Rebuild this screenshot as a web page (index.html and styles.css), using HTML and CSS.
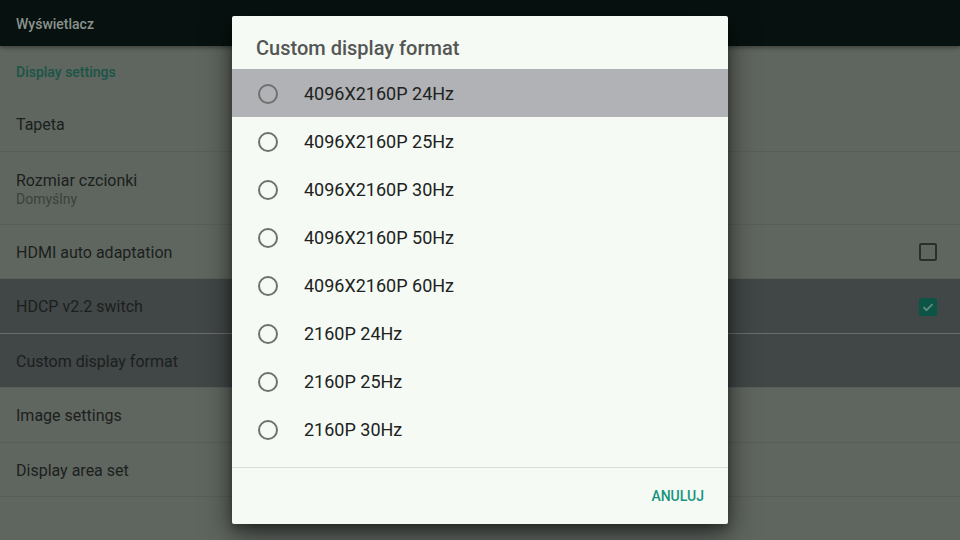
FILE: index.html
```html
<!DOCTYPE html>
<html lang="pl">
<head>
    <meta charset="UTF-8">
    <meta name="viewport" content="width=device-width, initial-scale=1.0">
    <title>Wyświetlacz</title>
    <link rel="stylesheet" href="styles.css">
</head>
<body>
    <div class="screen">
        <div class="top-bar">Wyświetlacz</div>
        <div class="settings">
            <div class="section-title">Display settings</div>
            <div class="row">Tapeta</div>
            <div class="row row-tall">
                <div>Rozmiar czcionki</div>
                <div class="row-sub">Domyślny</div>
            </div>
            <div class="row">
                <span>HDMI auto adaptation</span>
                <span class="checkbox"></span>
            </div>
            <div class="row row-active">
                <span>HDCP v2.2 switch</span>
                <span class="checkbox checked">
                    <svg width="14" height="14" viewBox="0 0 14 14"><path d="M2.5 7.2l3 3 6-6" fill="none" stroke="#5f8b80" stroke-width="1.8"/></svg>
                </span>
            </div>
            <div class="row row-active">Custom display format</div>
            <div class="row">Image settings</div>
            <div class="row">Display area set</div>
        </div>

        <div class="dialog">
            <div class="dialog-title">Custom display format</div>
            <div class="dialog-list">
                <div class="option selected"><span class="radio"></span>4096X2160P 24Hz</div>
                <div class="option"><span class="radio"></span>4096X2160P 25Hz</div>
                <div class="option"><span class="radio"></span>4096X2160P 30Hz</div>
                <div class="option"><span class="radio"></span>4096X2160P 50Hz</div>
                <div class="option"><span class="radio"></span>4096X2160P 60Hz</div>
                <div class="option"><span class="radio"></span>2160P 24Hz</div>
                <div class="option"><span class="radio"></span>2160P 25Hz</div>
                <div class="option"><span class="radio"></span>2160P 30Hz</div>
                <div class="option"><span class="radio"></span></div>
            </div>
            <div class="dialog-actions">
                <button class="btn-cancel">ANULUJ</button>
            </div>
        </div>
    </div>
</body>
</html>
```

FILE: styles.css
```css
body {
    margin: 0;
    padding: 0;
    font-family: Roboto, "Noto Sans", sans-serif;
    background-color: #5f655f;
}

.screen {
    position: relative;
    width: 960px;
    height: 540px;
    overflow: hidden;
    background-color: #5f655f;
}

.top-bar {
    height: 46px;
    background-color: #071210;
    color: #8b918d;
    font-size: 14px;
    font-weight: 500;
    padding-left: 16px;
    display: flex;
    align-items: center;
    padding-top: 1px;
    box-sizing: border-box;
    box-shadow: 0 2px 4px rgba(0,0,0,0.35);
    position: relative;
    z-index: 1;
}

.settings {
    display: flex;
    flex-direction: column;
}

.section-title {
    height: 51px;
    display: flex;
    align-items: center;
    padding-left: 16px;
    color: #1a5547;
    font-size: 14px;
    font-weight: 500;
}

.row {
    box-sizing: border-box;
    height: 54.5px;
    display: flex;
    align-items: center;
    justify-content: space-between;
    padding: 2px 23px 0 16px;
    color: #1b1f1d;
    font-size: 16px;
    border-bottom: 1px solid #585e59;
}

.row-tall {
    height: 73px;
    flex-direction: column;
    align-items: flex-start;
    justify-content: center;
    gap: 1px;
}

.row-sub {
    font-size: 14px;
    color: #3c413d;
}

.row-active {
    background-color: #414647;
    border-bottom-color: #6b706a;
}

.row-active + .row-active {
    border-bottom-color: #585e59;
}

.checkbox {
    width: 14px;
    height: 14px;
    border: 2px solid #2b2f2c;
    border-radius: 2px;
    display: flex;
    align-items: center;
    justify-content: center;
}

.checkbox.checked {
    background-color: #0c5445;
    border-color: #0c5445;
}

.dialog {
    position: absolute;
    left: 232px;
    top: 16px;
    width: 496px;
    height: 508px;
    background-color: #f5faf5;
    border-radius: 2px;
    box-shadow: 0 10px 30px rgba(0,0,0,0.55), 0 4px 10px rgba(0,0,0,0.3);
    z-index: 2;
    display: flex;
    flex-direction: column;
}

.dialog-title {
    box-sizing: border-box;
    height: 53px;
    padding: 10px 0 0 24px;
    display: flex;
    align-items: center;
    color: #545654;
    font-size: 20px;
    font-weight: 500;
}

.dialog-list {
    height: 398px;
    overflow: hidden;
    border-bottom: 1px solid #d9ddd9;
}

.option {
    box-sizing: border-box;
    height: 48px;
    display: flex;
    align-items: center;
    padding: 1px 0 0 26px;
    color: #202221;
    font-size: 18px;
}

.option.selected {
    background-color: #b0b2b5;
}

.radio {
    width: 16px;
    height: 16px;
    border: 2px solid #6f716f;
    border-radius: 50%;
    margin-right: 26px;
}

.dialog-actions {
    flex: 1;
    display: flex;
    justify-content: flex-end;
    align-items: center;
    padding-right: 16px;
}

.btn-cancel {
    background: none;
    border: none;
    font-family: Roboto, "Noto Sans", sans-serif;
    font-size: 14px;
    font-weight: 500;
    color: #15957e;
    padding: 8px;
    cursor: pointer;
}
```
